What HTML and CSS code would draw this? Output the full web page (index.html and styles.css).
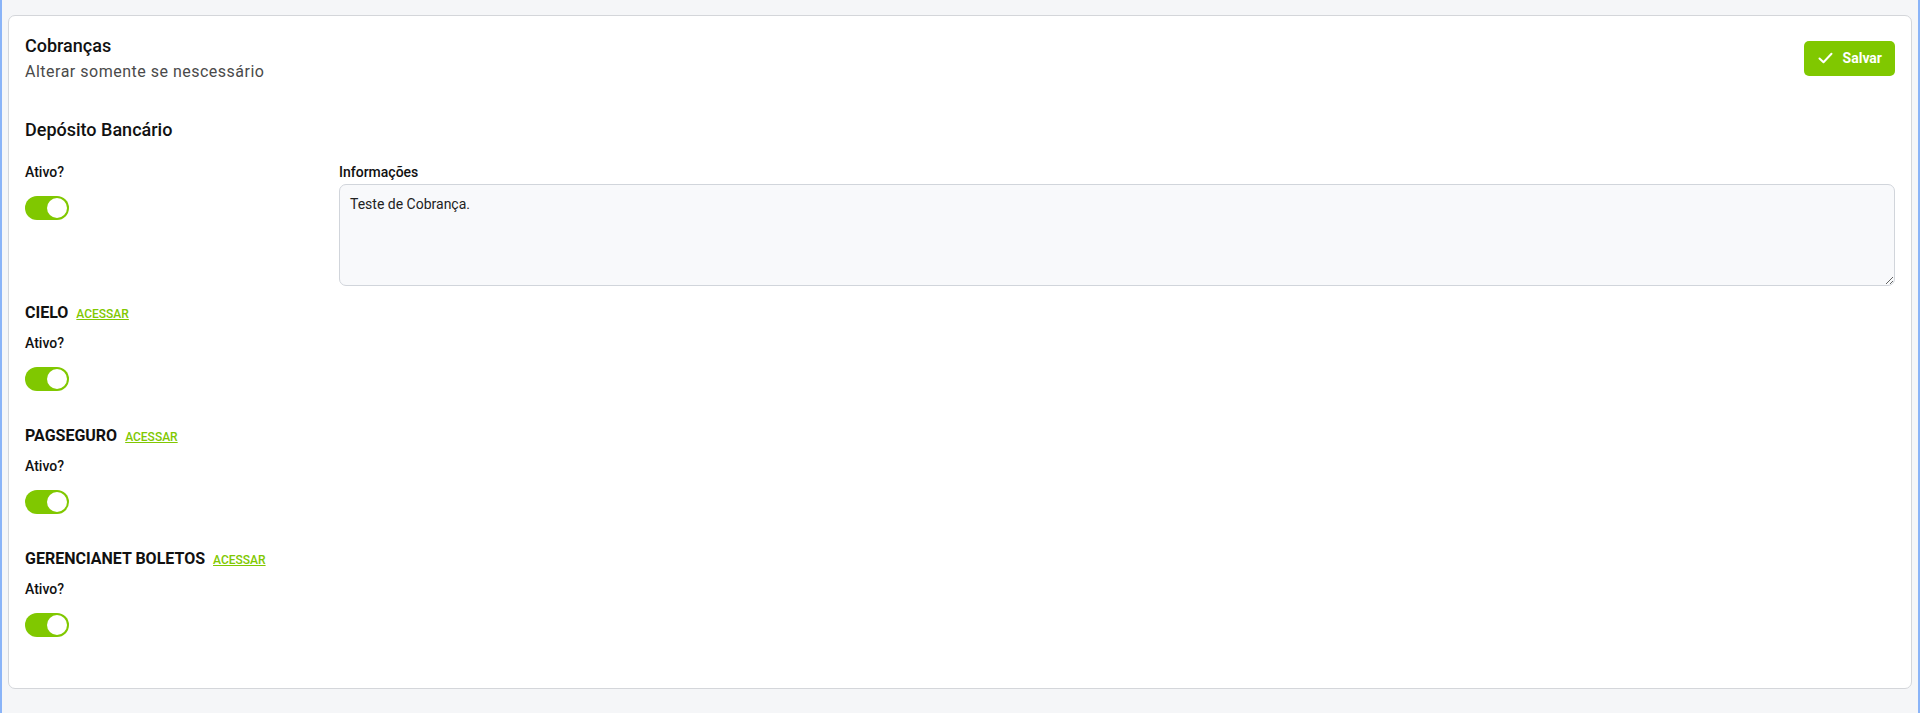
FILE: index.html
```html
<!DOCTYPE html>
<html lang="pt-BR">
<head>
<meta charset="utf-8">
<title>Cobranças</title>
<link rel="stylesheet" href="styles.css">
</head>
<body>
<div class="frame">
  <div class="card">
    <div class="card-header">
      <div>
        <h1 class="title">Cobranças</h1>
        <p class="subtitle">Alterar somente se nescessário</p>
      </div>
      <button class="btn-save" type="button">
        <svg width="15" height="12" viewBox="0 0 15 12" fill="none"><path d="M1.5 6.5 L5.5 10.2 L13.5 1.8" stroke="#fff" stroke-width="2" stroke-linecap="round" stroke-linejoin="round"/></svg>
        <span>Salvar</span>
      </button>
    </div>

    <h2 class="section-title">Depósito Bancário</h2>
    <div class="deposit-grid">
      <div class="field">
        <label class="label">Ativo?</label>
        <span class="toggle"><span class="knob"></span></span>
      </div>
      <div class="field">
        <label class="label label-tight">Informações</label>
        <textarea class="textarea">Teste de Cobrança.</textarea>
      </div>
    </div>

    <div class="provider">
      <div class="provider-head"><span class="provider-name">CIELO</span><a class="link" href="#">ACESSAR</a></div>
      <label class="label">Ativo?</label>
      <span class="toggle"><span class="knob"></span></span>
    </div>
    <div class="provider">
      <div class="provider-head"><span class="provider-name">PAGSEGURO</span><a class="link" href="#">ACESSAR</a></div>
      <label class="label">Ativo?</label>
      <span class="toggle"><span class="knob"></span></span>
    </div>
    <div class="provider">
      <div class="provider-head"><span class="provider-name">GERENCIANET BOLETOS</span><a class="link" href="#">ACESSAR</a></div>
      <label class="label">Ativo?</label>
      <span class="toggle"><span class="knob"></span></span>
    </div>
  </div>
</div>
</body>
</html>
```

FILE: styles.css
```css
* { box-sizing: border-box; }
html, body { margin: 0; padding: 0; }
body {
  background: #f5f6f8;
  font-family: Roboto, "Liberation Sans", Arial, sans-serif;
  color: #111;
  height: 713px;
}
.frame {
  min-height: 713px;
  border-left: 2px solid #8ab4f8;
  border-right: 2px solid #8ab4f8;
  padding: 15px 6px 0 6px;
}
.card {
  background: #fff;
  border: 1px solid #d4d6da;
  border-radius: 7px;
  padding: 16px 16px 16px 16px;
}
.card-header {
  display: flex;
  justify-content: space-between;
  align-items: center;
}
.title {
  margin: 0;
  font-size: 18px;
  line-height: 28px;
  font-weight: 500;
  color: #111;
}
.subtitle {
  margin: 0;
  font-size: 16px;
  line-height: 24px;
  font-weight: 400;
  color: #4a4a4a;
  letter-spacing: 0.5px;
}
.btn-save {
  display: flex;
  align-items: center;
  gap: 10px;
  height: 35px;
  padding: 0 13px 0 14px;
  border: none;
  border-radius: 5px;
  background: #80c800;
  color: #fff;
  font-family: inherit;
  font-size: 14px;
  font-weight: 700;
  cursor: pointer;
}
.section-title {
  margin: 32px 0 16px 0;
  font-size: 18px;
  line-height: 28px;
  font-weight: 500;
  color: #111;
}
.deposit-grid {
  display: grid;
  grid-template-columns: 290px 1fr;
  column-gap: 24px;
  padding-bottom: 15px;
}
.field { display: flex; flex-direction: column; align-items: flex-start; }
.label {
  display: block;
  font-size: 14px;
  line-height: 24px;
  font-weight: 500;
  color: #111;
  margin-bottom: 12px;
}
.label-tight { margin-bottom: 0; }
.toggle {
  display: flex;
  align-items: center;
  justify-content: flex-end;
  width: 44px;
  height: 24px;
  border-radius: 12px;
  background: #80c800;
  padding: 2px;
}
.knob {
  width: 20px;
  height: 20px;
  border-radius: 50%;
  background: #fff;
}
.textarea {
  width: 100%;
  height: 102px;
  background: #f8f9fb;
  border: 1px solid #d1d5db;
  border-radius: 7px;
  padding: 9px 10px;
  font-family: inherit;
  font-size: 14px;
  line-height: 20px;
  color: #222;
  resize: vertical;
  outline: none;
}
.provider { padding-bottom: 33px; }
.provider:last-child { padding-bottom: 35px; }
.provider-head {
  display: flex;
  align-items: baseline;
  gap: 8px;
  line-height: 24px;
  margin-bottom: 5px;
}
.provider-name {
  font-size: 16px;
  font-weight: 700;
  color: #111;
}
.link {
  font-size: 12px;
  font-weight: 500;
  color: #80c800;
  text-decoration: underline;
}
```
